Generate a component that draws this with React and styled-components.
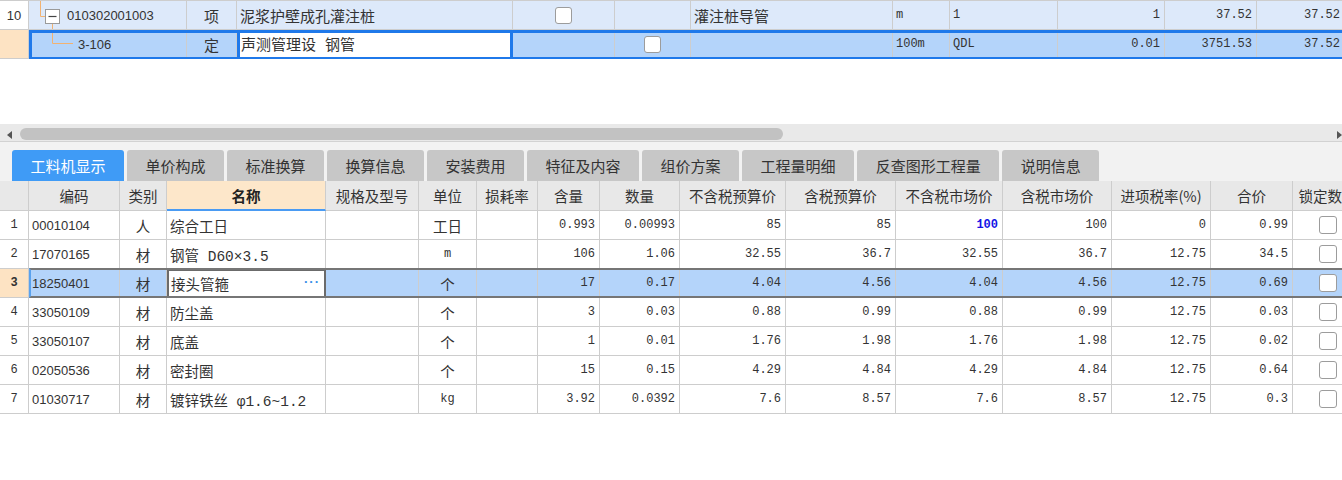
import React from 'react';
import styled, { createGlobalStyle } from 'styled-components';

const GlobalStyle = createGlobalStyle`
  html, body {
    margin: 0;
    padding: 0;
    background: #ffffff;
    overflow: hidden;
  }
  body {
    font-family: "Noto Sans CJK SC", "Liberation Sans", sans-serif;
    color: #333;
  }
`;

const topCols = [29, 158, 50, 276, 102, 76, 202, 57, 108, 107, 92, 88];
const detailCols = [29, 91, 47, 159, 93, 58, 61, 62, 80, 106, 110, 107, 109, 99, 82, 70];

const Page = styled.div`
  width: 1342px;
  height: 480px;
  overflow: hidden;
  display: flex;
  flex-direction: column;
  background: #fff;
`;

const GridWrap = styled.div`
  width: 1342px;
  overflow: hidden;
  border-top: ${p => (p.$topLine ? '1px solid #cdcdcd' : 'none')};
`;

const Row = styled.div`
  position: relative;
  display: grid;
  grid-template-columns: ${p => p.$cols.map(c => `${c}px`).join(' ')};
  width: max-content;
  height: ${p => p.$h || 29}px;
  background: ${p => p.$bg || '#fff'};

  &::after {
    content: '';
    display: ${p => (p.$frame ? 'block' : 'none')};
    position: absolute;
    left: 29px;
    right: 0;
    top: ${p => (p.$frame === 'blue' ? '0' : '-1px')};
    bottom: ${p => (p.$frame === 'blue' ? '-1px' : '0')};
    box-sizing: border-box;
    pointer-events: none;
    border: ${p => (p.$frame === 'blue' ? '3px solid #1f79ea' : 'none')};
    border-top: ${p => (p.$frame === 'gray' ? '2px solid #767676' : '')};
    border-bottom: ${p => (p.$frame === 'gray' ? '2px solid #767676' : '')};
    border-left: ${p => (p.$frame === 'gray' ? '2px solid #5aa2ee' : '')};
  }
`;

const fontStack = p => {
  if (p.$mono) return '"Liberation Mono", "Noto Sans CJK SC", monospace';
  if (p.$latin) return '"Liberation Sans", "Noto Sans CJK SC", sans-serif';
  if (p.$mixed) return '"Liberation Mono", "Noto Sans CJK SC", monospace';
  return '"Noto Sans CJK SC", "Liberation Sans", sans-serif';
};

const Cell = styled.div`
  box-sizing: border-box;
  height: 100%;
  display: flex;
  align-items: center;
  justify-content: ${p =>
    p.$align === 'right' ? 'flex-end' : p.$align === 'center' ? 'center' : 'flex-start'};
  padding: 0 ${p => (p.$align === 'right' ? 4 : 3)}px;
  border-right: 1px solid #cdcdcd;
  border-bottom: 1px solid #cdcdcd;
  background: ${p => p.$bg || 'transparent'};
  font-family: ${fontStack};
  font-size: ${p => (p.$mono ? 12 : p.$latin ? 13 : p.$big ? 15 : 14.5)}px;
  font-weight: ${p => (p.$bold ? 700 : 400)};
  color: ${p => p.$color || '#333'};
  white-space: pre;
  overflow: hidden;
  position: relative;
`;

const EditCell = styled(Cell)`
  background: #fff;
  border-left: 3px solid #1f79ea;
  border-right: 3px solid #1f79ea;
  padding-left: 1px;
`;

const NameEditor = styled(Cell)`
  background: #fff;
  border: 2px solid #6b6b6b;
  justify-content: space-between;
  padding: 0 4px 0 2px;
`;

const Dots = styled.span`
  color: #3a8fe8;
  font-family: "Liberation Sans", sans-serif;
  font-size: 13px;
  letter-spacing: 1px;
  font-weight: 700;
  margin-top: -4px;
`;

const HeaderCell = styled(Cell)`
  justify-content: center;
  background: ${p => (p.$active ? '#fde7ca' : '#e8e8e8')};
  border-bottom: ${p => (p.$active ? '2px solid #4a9bf3' : '1px solid #cdcdcd')};
  font-size: 14.5px;
  font-weight: ${p => (p.$active ? 700 : 400)};
  color: ${p => (p.$active ? '#222' : '#333')};
`;

const Check = styled.span`
  display: inline-block;
  box-sizing: border-box;
  width: ${p => p.$size || 17}px;
  height: ${p => p.$size || 17}px;
  border: 1px solid #9c9c9c;
  border-radius: 3px;
  background: #fff;
`;

const TreeText = styled.span`
  font-family: "Liberation Sans", sans-serif;
  font-size: 13px;
  color: #333;
  margin-left: ${p => p.$gap}px;
`;

const TreeLines = styled.svg`
  flex: none;
  display: block;
`;

const Blank = styled.div`
  height: 65px;
  background: #fff;
`;

const HScroll = styled.div`
  height: 18px;
  box-sizing: border-box;
  background: #e9e9e9;
  border-bottom: 1px solid #d2d2d2;
  display: flex;
  align-items: flex-start;
  padding-top: 4px;
`;

const Arrow = styled.span`
  width: 0;
  height: 0;
  align-self: center;
  margin: ${p => (p.$dir === 'left' ? '0 0 0 7px' : '0 0 0 auto')};
  border-top: 4px solid transparent;
  border-bottom: 4px solid transparent;
  border-right: ${p => (p.$dir === 'left' ? '5px solid #555' : 'none')};
  border-left: ${p => (p.$dir === 'right' ? '5px solid #555' : 'none')};
`;

const Thumb = styled.span`
  width: 763px;
  height: 12px;
  margin-left: 8px;
  border-radius: 6px;
  background: #c2c2c2;
`;

const TabBar = styled.div`
  height: 39px;
  box-sizing: border-box;
  background: #f2f2f2;
  display: flex;
  align-items: flex-end;
  gap: 3px;
  padding-left: 12px;
`;

const Tab = styled.div`
  height: 31px;
  padding: 0 18.5px;
  display: flex;
  align-items: center;
  border-radius: 3px 3px 0 0;
  background: ${p => (p.$active ? '#3f9bf6' : '#c7c7c7')};
  color: ${p => (p.$active ? '#fff' : '#333')};
  font-size: 15px;
  white-space: nowrap;
`;

const tabs = ['工料机显示', '单价构成', '标准换算', '换算信息', '安装费用', '特征及内容', '组价方案', '工程量明细', '反查图形工程量', '说明信息'];

const headers = ['', '编码', '类别', '名称', '规格及型号', '单位', '损耗率', '含量', '数量', '不含税预算价', '含税预算价', '不含税市场价', '含税市场价', '进项税率(%)', '合价', '锁定数量'];

const rows = [
  ['1', '00010104', '人', '综合工日', '', '工日', '', '0.993', '0.00993', '85', '85', '100', '100', '0', '0.99'],
  ['2', '17070165', '材', '钢管 D60×3.5', '', 'm', '', '106', '1.06', '32.55', '36.7', '32.55', '36.7', '12.75', '34.5'],
  ['3', '18250401', '材', '接头管箍', '', '个', '', '17', '0.17', '4.04', '4.56', '4.04', '4.56', '12.75', '0.69'],
  ['4', '33050109', '材', '防尘盖', '', '个', '', '3', '0.03', '0.88', '0.99', '0.88', '0.99', '12.75', '0.03'],
  ['5', '33050107', '材', '底盖', '', '个', '', '1', '0.01', '1.76', '1.98', '1.76', '1.98', '12.75', '0.02'],
  ['6', '02050536', '材', '密封圈', '', '个', '', '15', '0.15', '4.29', '4.84', '4.29', '4.84', '12.75', '0.64'],
  ['7', '01030717', '材', '镀锌铁丝 φ1.6~1.2', '', 'kg', '', '3.92', '0.0392', '7.6', '8.57', '7.6', '8.57', '12.75', '0.3'],
];

const LINE = '#f2b271';

const TopGrid = () => (
  <GridWrap $topLine>
    <Row $cols={topCols} $bg="#dde9fa">
      <Cell $align="center" $latin $bg="#fff">10</Cell>
      <Cell style={{ paddingLeft: 0 }}>
        <TreeLines width="31" height="28">
          <path d="M11.5 0 V15.5 H16" stroke={LINE} strokeWidth="1" fill="none" />
          <path d="M23.5 23 V28" stroke={LINE} strokeWidth="1" fill="none" />
          <rect x="16.5" y="8.5" width="14" height="14" fill="#fff" stroke="#9a9a9a" />
          <path d="M19.5 15.5 H27.5" stroke="#444" strokeWidth="1.2" />
        </TreeLines>
        <TreeText $gap={7}>010302001003</TreeText>
      </Cell>
      <Cell $align="center" $big>项</Cell>
      <Cell $big>泥浆护壁成孔灌注桩</Cell>
      <Cell $align="center"><Check /></Cell>
      <Cell />
      <Cell $big>灌注桩导管</Cell>
      <Cell $mono>m</Cell>
      <Cell $mono>1</Cell>
      <Cell $mono $align="right">1</Cell>
      <Cell $mono $align="right">37.52</Cell>
      <Cell $mono $align="right">37.52</Cell>
    </Row>
    <Row $cols={topCols} $bg="#b4d4fa" $frame="blue">
      <Cell $bg="#fde3c3" />
      <Cell style={{ paddingLeft: 0 }}>
        <TreeLines width="44" height="28">
          <path d="M23.5 0 V13.5 H44" stroke={LINE} strokeWidth="1" fill="none" />
        </TreeLines>
        <TreeText $gap={5}>3-106</TreeText>
      </Cell>
      <Cell $align="center" $big>定</Cell>
      <EditCell $big $mixed>声测管理设 钢管</EditCell>
      <Cell />
      <Cell $align="center"><Check /></Cell>
      <Cell />
      <Cell $mono>100m</Cell>
      <Cell $mono>QDL</Cell>
      <Cell $mono $align="right">0.01</Cell>
      <Cell $mono $align="right">3751.53</Cell>
      <Cell $mono $align="right">37.52</Cell>
    </Row>
  </GridWrap>
);

const DetailRow = ({ data }) => {
  const selected = data[0] === '3';
  return (
    <Row $cols={detailCols} $bg={selected ? '#b4d4fa' : '#fff'} $frame={selected ? 'gray' : null}>
      <Cell $align="center" $mono $bold={selected} $bg={selected ? '#fde3c3' : '#fff'}>{data[0]}</Cell>
      <Cell $latin>{data[1]}</Cell>
      <Cell $align="center">{data[2]}</Cell>
      {selected ? (
        <NameEditor>
          <span>{data[3]}</span>
          <Dots>···</Dots>
        </NameEditor>
      ) : (
        <Cell $mixed>{data[3]}</Cell>
      )}
      <Cell />
      <Cell $align="center" $mono={/^[a-z]+$/.test(data[5])}>{data[5]}</Cell>
      <Cell />
      {data.slice(7).map((v, i) => (
        <Cell
          key={i}
          $mono
          $align="right"
          $bold={data[0] === '1' && i === 4}
          $color={data[0] === '1' && i === 4 ? '#1414e6' : undefined}
        >
          {v}
        </Cell>
      ))}
      <Cell $align="center"><Check $size={18} /></Cell>
    </Row>
  );
};

const DetailGrid = () => (
  <GridWrap>
    <Row $cols={detailCols} $h={30} $bg="#e8e8e8">
      {headers.map((h, i) => (
        <HeaderCell key={i} $active={h === '名称'}>{h}</HeaderCell>
      ))}
    </Row>
    {rows.map(r => (
      <DetailRow key={r[0]} data={r} />
    ))}
  </GridWrap>
);

export default function App() {
  return (
    <Page>
      <GlobalStyle />
      <TopGrid />
      <Blank />
      <HScroll>
        <Arrow $dir="left" />
        <Thumb />
        <Arrow $dir="right" />
      </HScroll>
      <TabBar>
        {tabs.map((t, i) => (
          <Tab key={t} $active={i === 0}>{t}</Tab>
        ))}
      </TabBar>
      <DetailGrid />
    </Page>
  );
}
